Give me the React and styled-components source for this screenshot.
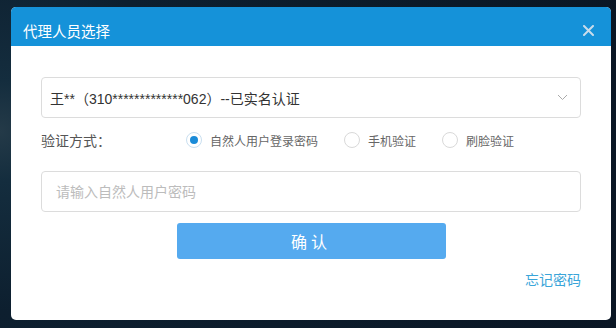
import React, { useState } from "react";
import styled, { createGlobalStyle } from "styled-components";

const GlobalStyle = createGlobalStyle`
  html, body {
    margin: 0;
    padding: 0;
  }
  body {
    width: 616px;
    height: 328px;
    overflow: hidden;
    font-family: "Liberation Sans", "Noto Sans CJK SC", sans-serif;
    background: radial-gradient(circle at 0 40%, #243a48 0, #142d3e 50px, #0d1f2f 180px, #0a1624 100%);
  }
`;

const Page = styled.div`
  height: 328px;
  padding: 7px 5px 8px 11px;
  box-sizing: border-box;
`;

const Dialog = styled.section`
  height: 313px;
  background: #fff;
  border-radius: 5px;
  overflow: hidden;
  display: flex;
  flex-direction: column;
`;

const Header = styled.header`
  height: 39px;
  flex: none;
  box-sizing: border-box;
  background: #1592d9;
  display: flex;
  align-items: center;
  justify-content: space-between;
  padding: 8px 17px 0 12px;
`;

const Title = styled.h2`
  margin: 0;
  font-size: 14.5px;
  font-weight: 400;
  color: #fff;
`;

const Close = styled.button`
  border: 0;
  background: none;
  padding: 0;
  width: 11px;
  height: 11px;
  display: flex;
  cursor: pointer;
`;

const Body = styled.div`
  padding: 31px 30px 0 30px;
  display: flex;
  flex-direction: column;
`;

const Select = styled.div`
  height: 41px;
  box-sizing: border-box;
  border: 1px solid #dcdcdc;
  border-radius: 4px;
  display: flex;
  align-items: center;
  justify-content: space-between;
  padding: 0 12px 0 8px;
  font-size: 14px;
  color: #333;
`;

const MethodRow = styled.div`
  display: flex;
  align-items: center;
  height: 44px;
  font-size: 12px;
  color: #666;
`;

const Label = styled.span`
  width: 145px;
  flex: none;
  font-size: 14px;
  color: #555;
`;

const Option = styled.label`
  display: flex;
  align-items: center;
  gap: 8px;
  margin-right: 26px;
  cursor: pointer;
`;

const Radio = styled.span`
  width: 16px;
  height: 16px;
  box-sizing: border-box;
  border-radius: 50%;
  border: 1px solid ${(p) => (p.$on ? "#c9dff0" : "#d9d9d9")};
  display: flex;
  align-items: center;
  justify-content: center;
  &::after {
    content: "";
    width: 8px;
    height: 8px;
    border-radius: 50%;
    background: ${(p) => (p.$on ? "#1a8bd8" : "transparent")};
  }
`;

const Input = styled.input`
  margin-top: 9px;
  height: 41px;
  box-sizing: border-box;
  border: 1px solid #dcdcdc;
  border-radius: 4px;
  padding: 0 14px;
  font-family: inherit;
  font-size: 14px;
  outline: none;
  &::placeholder {
    color: #bcbcbc;
  }
`;

const Submit = styled.button`
  align-self: center;
  margin: 11px 0 0 0;
  width: 269px;
  height: 36px;
  border: 0;
  border-radius: 3px;
  background: #55aaef;
  color: #fff;
  font-family: inherit;
  font-size: 16px;
  letter-spacing: 4px;
  cursor: pointer;
`;

const Forgot = styled.a`
  align-self: flex-end;
  margin-top: 10px;
  font-size: 14px;
  color: #3aa5d9;
  text-decoration: none;
`;

const options = [
  { id: "pwd", text: "自然人用户登录密码" },
  { id: "phone", text: "手机验证" },
  { id: "face", text: "刷脸验证" },
];

export default function App() {
  const [method, setMethod] = useState("pwd");

  return (
    <>
      <GlobalStyle />
      <Page>
        <Dialog>
          <Header>
            <Title>代理人员选择</Title>
            <Close aria-label="关闭">
              <svg width="11" height="11" viewBox="0 0 11 11">
                <path d="M1 1 L10 10 M10 1 L1 10" stroke="#c9dceb" strokeWidth="2" strokeLinecap="round" />
              </svg>
            </Close>
          </Header>
          <Body>
            <Select>
              <span>王**（310*************062）--已实名认证</span>
              <svg width="11" height="7" viewBox="0 0 11 7">
                <path d="M1 1 L5.5 5.5 L10 1" fill="none" stroke="#aaa" strokeWidth="1" />
              </svg>
            </Select>
            <MethodRow>
              <Label>验证方式：</Label>
              {options.map((o) => (
                <Option key={o.id} onClick={() => setMethod(o.id)}>
                  <Radio $on={method === o.id} />
                  {o.text}
                </Option>
              ))}
            </MethodRow>
            <Input type="password" placeholder="请输入自然人用户密码" />
            <Submit>确认</Submit>
            <Forgot href="#">忘记密码</Forgot>
          </Body>
        </Dialog>
      </Page>
    </>
  );
}
